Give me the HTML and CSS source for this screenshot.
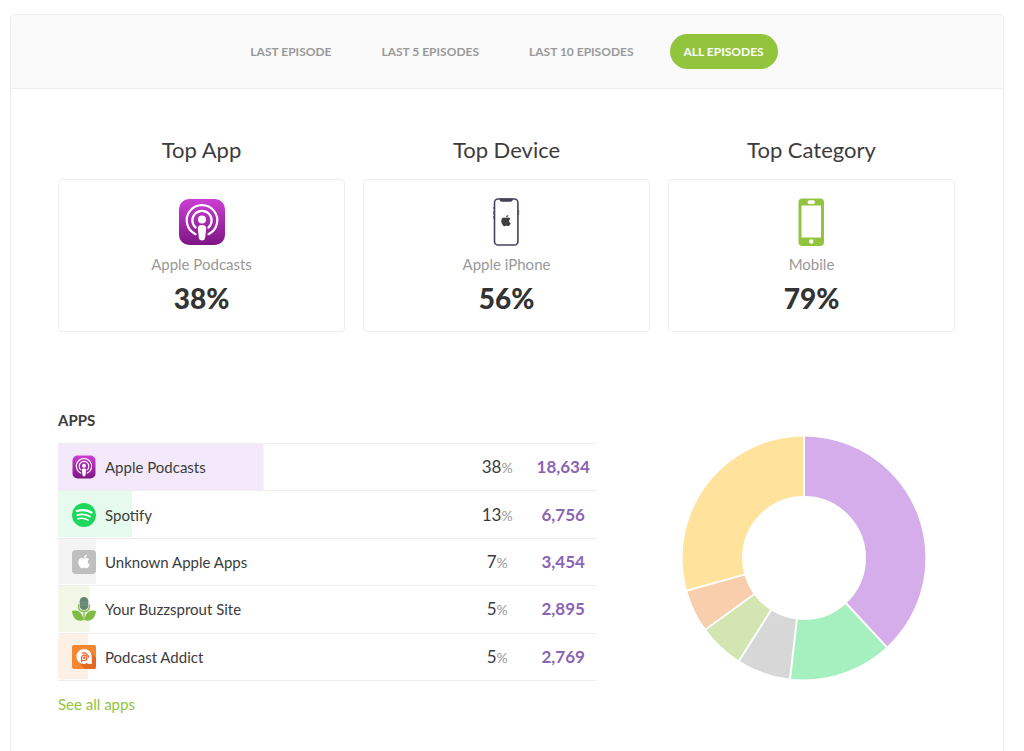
FILE: index.html
```
<!DOCTYPE html>
<html lang="en">
<head>
<meta charset="utf-8">
<meta name="viewport" content="width=device-width, initial-scale=1">
<title>Podcast apps and devices</title>
<link rel="stylesheet" href="styles.css">
</head>
<body>
<svg class="sprites" aria-hidden="true">
  <defs>
    <linearGradient id="podcast-fill" x1="0" y1="0" x2="0" y2="1">
      <stop offset="0" stop-color="#cb3fd3"/>
      <stop offset="1" stop-color="#7f1585"/>
    </linearGradient>
    <symbol id="podcasts" viewBox="0 0 48 48">
      <rect x="1" y="1" width="46" height="46" rx="10" fill="url(#podcast-fill)"/>
      <g fill="none" stroke="#fff" stroke-width="2.2" stroke-linecap="round">
        <path d="M17.5 36.2A15.3 15.3 0 1 1 30.5 36.2"/>
        <path d="M17.6 29.6A9.6 9.6 0 1 1 30.4 29.6"/>
      </g>
      <circle cx="24" cy="21.500" r="4" fill="#fff"/>
      <path d="M24 27c3 0 4.400 1.200 4.200 3.600l-1 9c-.2 2-1.400 3-3.200 3s-3-1-3.200-3l-1-9c-.2-2.400 1.200-3.600 4.200-3.600z" fill="#fff"/>
    </symbol>
    <symbol id="apple" viewBox="0 0 24 24">
      <path d="M17.050 20.280c-.98.95-2.050.8-3.080.35-1.090-.46-2.090-.48-3.240 0-1.440.62-2.200.44-3.060-.35C2.790 15.250 3.510 7.590 9.050 7.310c1.350.07 2.290.74 3.080.8 1.180-.24 2.310-.93 3.570-.84 1.510.12 2.650.72 3.400 1.800-3.120 1.870-2.380 5.980.48 7.130-.57 1.500-1.310 2.990-2.530 4.080zM12.030 7.250c-.15-2.230 1.660-4.070 3.740-4.250.29 2.580-2.340 4.500-3.740 4.250z"/>
    </symbol>
  </defs>
</svg>

<main class="panel">
  <nav class="tabs" aria-label="Episode range">
    <button class="tab" type="button">LAST EPISODE</button>
    <button class="tab" type="button">LAST 5 EPISODES</button>
    <button class="tab" type="button">LAST 10 EPISODES</button>
    <button class="tab tab-active" type="button" aria-current="true">ALL EPISODES</button>
  </nav>

  <div class="content">
    <section class="tops">
      <article class="top">
        <h2 class="top-title">Top App</h2>
        <div class="card">
          <svg class="card-icon" viewBox="0 0 48 48" aria-hidden="true"><use href="#podcasts"/></svg>
          <p class="card-label">Apple Podcasts</p>
          <p class="card-value">38%</p>
        </div>
      </article>
      <article class="top">
        <h2 class="top-title">Top Device</h2>
        <div class="card">
          <svg class="card-icon" viewBox="0 0 48 48" aria-hidden="true">
            <rect x="11.500" y="1" width="23.400" height="46" rx="3.600" fill="#fff" stroke="#45415a" stroke-width="1.600"/>
            <path d="M16.500 .5h13.400c0 2.200-.8 3.200-2.600 3.200h-8.200c-1.800 0-2.600-1-2.600-3.200z" fill="#45415a"/>
            <path d="M10.700 9v2M10.700 13v4M10.700 18v3M35.700 12v5" stroke="#45415a" stroke-width=".7"/>
            <use href="#apple" x="15.500" y="15" width="15" height="15" fill="#3f3f42"/>
          </svg>
          <p class="card-label">Apple iPhone</p>
          <p class="card-value">56%</p>
        </div>
      </article>
      <article class="top">
        <h2 class="top-title">Top Category</h2>
        <div class="card">
          <svg class="card-icon" viewBox="0 0 48 48" aria-hidden="true">
            <rect x="10.500" y=".5" width="25.500" height="47.500" rx="4" fill="#92c43e"/>
            <rect x="13.500" y="7.500" width="19.500" height="32" fill="#fff"/>
            <rect x="19.500" y="2.200" width="7.500" height="3.800" rx="1.900" fill="#fff"/>
            <circle cx="23.300" cy="43.500" r="2.200" fill="#fff"/>
          </svg>
          <p class="card-label">Mobile</p>
          <p class="card-value">79%</p>
        </div>
      </article>
    </section>

    <section class="breakdown">
      <div class="apps">
        <h3 class="apps-title" id="apps-title">APPS</h3>
        <table class="apps-table" aria-labelledby="apps-title">
          <tbody>
            <tr class="row row-purple" style="--share: 38.2%">
              <td class="icon-cell"><svg class="row-icon" viewBox="0 0 48 48" aria-hidden="true"><use href="#podcasts"/></svg></td>
              <th class="name" scope="row">Apple Podcasts</th>
              <td class="percent">38<span class="sign">%</span></td>
              <td class="count">18,634</td>
            </tr>
            <tr class="row row-green" style="--share: 13.8%">
              <td class="icon-cell"><svg class="row-icon" viewBox="0 0 24 24" aria-hidden="true">
                <circle cx="12" cy="12" r="12" fill="#1ed75f"/>
                <g fill="none" stroke="#fff" stroke-linecap="round">
                  <path d="M4.800 8c5-1.400 10.400-.9 14.700 1.500" stroke-width="2.200"/>
                  <path d="M5.300 12.100c4.300-1.200 8.900-.7 12.600 1.400" stroke-width="1.800"/>
                  <path d="M5.800 15.800c3.700-.9 7.400-.5 10.500 1.300" stroke-width="1.400"/>
                </g>
              </svg></td>
              <th class="name" scope="row">Spotify</th>
              <td class="percent">13<span class="sign">%</span></td>
              <td class="count">6,756</td>
            </tr>
            <tr class="row row-gray" style="--share: 7.1%">
              <td class="icon-cell"><svg class="row-icon" viewBox="0 0 24 24" aria-hidden="true">
                <rect width="24" height="24" rx="4" fill="#bfbfbf"/>
                <use href="#apple" x="3" y="2.500" width="18" height="18" fill="#fff"/>
              </svg></td>
              <th class="name" scope="row">Unknown Apple Apps</th>
              <td class="percent">7<span class="sign">%</span></td>
              <td class="count">3,454</td>
            </tr>
            <tr class="row row-lime" style="--share: 5.9%">
              <td class="icon-cell"><svg class="row-icon" viewBox="0 0 24 24" aria-hidden="true">
                <path d="M6.600 7.500v1.800c0 3.200 2.200 5.200 5.400 5.200s5.400-2 5.400-5.200V7.500M12 14.500V23" fill="none" stroke="#80bc45" stroke-width="1.300"/>
                <path d="M0 14c5.500-1.500 10.300.4 11.600 9.300C4.500 25 1 21.500 0 14zM24 14c-5.500-1.500-10.300.4-11.600 9.300C19.500 25 23 21.500 24 14z" fill="#80bc45"/>
                <rect x="7.700" y="0" width="8.600" height="13" rx="4.300" fill="#648571"/>
                <path d="M8 5.200h8M8 8h8" stroke="#8ba596" stroke-width=".6"/>
              </svg></td>
              <th class="name" scope="row">Your Buzzsprout Site</th>
              <td class="percent">5<span class="sign">%</span></td>
              <td class="count">2,895</td>
            </tr>
            <tr class="row row-orange" style="--share: 5.6%">
              <td class="icon-cell"><svg class="row-icon" viewBox="0 0 24 24" aria-hidden="true">
                <rect width="24" height="24" rx="2" fill="#f6862f"/>
                <path d="M18 7l6 6v9a2 2 0 0 1-2 2H13l-5-5z" fill="#e56a21"/>
                <path d="M12 4a7.800 7.800 0 0 1 7.800 7.800V19h-4.300v-1.500c-1 .9-2.200 1.500-3.700 1.500A7.500 7.500 0 0 1 12 4z" fill="#fff"/>
                <g fill="none" stroke="#ef5a28" stroke-width="1.100">
                  <path d="M9.600 17.500v-4.700a2.700 2.700 0 1 1 2.700 2.700H9.600"/>
                  <path d="M10 8.200c3-1 6.500 1 6.800 4.600"/>
                </g>
                <circle cx="12.300" cy="12.700" r="1.200" fill="#ef5a28"/>
              </svg></td>
              <th class="name" scope="row">Podcast Addict</th>
              <td class="percent">5<span class="sign">%</span></td>
              <td class="count">2,769</td>
            </tr>
          </tbody>
        </table>
        <a class="see-all" href="#apps">See all apps</a>
      </div>

      <div class="chart-column">
        <svg class="chart" viewBox="-122 -122 244 244" role="img" aria-label="Share of downloads by app">
          <g fill="none" stroke-width="59.500">
            <circle class="slice slice-purple" r="91.700" pathLength="360" stroke-dasharray="137.100 360"/>
            <circle class="slice slice-green" r="91.700" pathLength="360" stroke-dasharray="49.500 360" stroke-dashoffset="-137.100"/>
            <circle class="slice slice-gray" r="91.700" pathLength="360" stroke-dasharray="25.700 360" stroke-dashoffset="-186.600"/>
            <circle class="slice slice-lime" r="91.700" pathLength="360" stroke-dasharray="21.700 360" stroke-dashoffset="-212.300"/>
            <circle class="slice slice-orange" r="91.700" pathLength="360" stroke-dasharray="20.400 360" stroke-dashoffset="-234"/>
            <circle class="slice slice-yellow" r="91.700" pathLength="360" stroke-dasharray="105.600 360" stroke-dashoffset="-254.400"/>
          </g>
          <g stroke="#fff" stroke-width="2">
            <path d="M0-60V-123"/>
            <path d="M0-60V-123" transform="rotate(137.100)"/>
            <path d="M0-60V-123" transform="rotate(186.600)"/>
            <path d="M0-60V-123" transform="rotate(212.300)"/>
            <path d="M0-60V-123" transform="rotate(234)"/>
            <path d="M0-60V-123" transform="rotate(254.400)"/>
          </g>
        </svg>
      </div>
    </section>
  </div>
</main>
</body>
</html>
```
FILE: styles.css
```
* {
  box-sizing: border-box;
}

body {
  margin: 0;
  padding: 14px 20px 0 10px;
  min-height: 100vh;
  display: flex;
  background: #fff;
  color: #3c3c3c;
  font-family: Lato, "Liberation Sans", sans-serif;
  font-size: 15px;
  line-height: 24px;
}

h2,
h3,
p {
  margin: 0;
}

.sprites {
  position: absolute;
  width: 0;
  height: 0;
}

.panel {
  flex: 1;
  min-width: 0;
  border: 1px solid #eee;
  border-bottom: 0;
  border-radius: 5px 5px 0 0;
}

.tabs {
  display: flex;
  flex-wrap: wrap;
  justify-content: center;
  gap: 22px;
  padding: 19px;
  background: #fafafa;
  border-bottom: 1px solid #eee;
  border-radius: 5px 5px 0 0;
}

.tab {
  height: 35px;
  padding: 0 14px;
  border: 0;
  border-radius: 18px;
  background: transparent;
  color: #999;
  font: bold 12px/35px Lato, "Liberation Sans", sans-serif;
  cursor: pointer;
}

.tab-active {
  background: #92c43e;
  color: #fff;
}

.content {
  padding: 44px 48px 32px 47px;
}

.tops {
  display: grid;
  grid-template-columns: repeat(3, 1fr);
  gap: 18px;
}

.top-title {
  margin-bottom: 12px;
  font-size: 22px;
  font-weight: normal;
  line-height: 34px;
  text-align: center;
}

.card {
  display: flex;
  flex-direction: column;
  align-items: center;
  padding: 18px 16px 15px;
  border: 1px solid #eee;
  border-radius: 4px;
}

.card-icon {
  width: 48px;
  height: 48px;
  margin-bottom: 6px;
}

.card-label {
  color: #999;
}

.card-value {
  margin-top: 4px;
  color: #333;
  font-size: 28px;
  font-weight: 900;
  line-height: 36px;
}

.breakdown {
  display: grid;
  grid-template-columns: 3fr 2fr;
  margin-top: 76px;
}

.apps-title {
  margin-bottom: 11px;
  font-size: 15px;
}

.apps-table {
  width: 100%;
  height: 238px;
  border-collapse: collapse;
  border-top: 1px solid #eee;
}

.row {
  background: linear-gradient(var(--tint), var(--tint)) no-repeat 0 0 / var(--share) 100%;
  border-bottom: 1px solid #eee;
}

.row-purple {
  --tint: #f4e9fa;
}

.row-green {
  --tint: #e6fbed;
}

.row-gray {
  --tint: #f4f4f4;
}

.row-lime {
  --tint: #f2f7e8;
}

.row-orange {
  --tint: #fdf0e7;
}

.row td,
.row th {
  padding: 0;
  vertical-align: middle;
}

.row .icon-cell {
  width: 47px;
  padding-left: 14px;
}

.row-icon {
  display: block;
  width: 24px;
  height: 24px;
}

.name {
  font-weight: normal;
  text-align: left;
}

.row .percent {
  width: 66px;
  padding-top: 1px;
  font-size: 17px;
  text-align: center;
}

.sign {
  color: #999;
  font-size: 14px;
}

.count {
  width: 66px;
  color: #8c64b4;
  font-size: 17px;
  font-weight: bold;
  text-align: center;
}

.see-all {
  display: inline-block;
  margin-top: 11px;
  color: #92c43e;
  text-decoration: none;
}

.chart-column {
  display: flex;
  justify-content: center;
  align-items: flex-start;
  padding: 28px 0 0 56px;
}

.chart {
  width: 100%;
  max-width: 244px;
}

.slice {
  transform: rotate(-90deg);
}

.slice-purple {
  stroke: #d4adea;
}

.slice-green {
  stroke: #a5f0be;
}

.slice-gray {
  stroke: #d7d7d7;
}

.slice-lime {
  stroke: #d3e5b1;
}

.slice-orange {
  stroke: #f9ceac;
}

.slice-yellow {
  stroke: #ffe29b;
}
```
